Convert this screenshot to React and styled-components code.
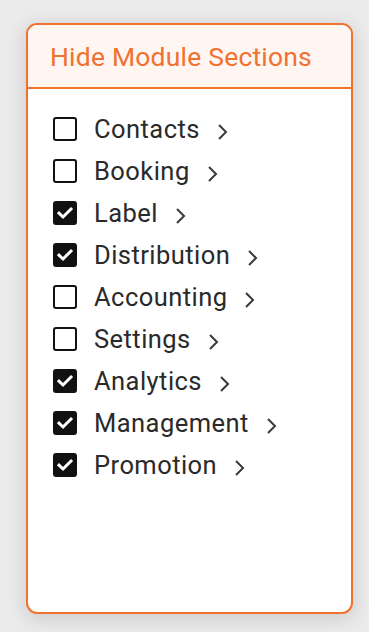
import React, { useState } from "react";
import styled, { createGlobalStyle } from "styled-components";

const GlobalStyle = createGlobalStyle`
  html, body {
    margin: 0;
    padding: 0;
    background: #ebebeb;
    font-family: Roboto, "Noto Sans", sans-serif;
  }
`;

const Page = styled.div`
  width: 369px;
  height: 632px;
  padding: 23px 16px 18px 26px;
  box-sizing: border-box;
  display: flex;
`;

const Card = styled.div`
  flex: 1;
  display: flex;
  flex-direction: column;
  background: #ffffff;
  border: 2px solid #f07130;
  border-radius: 11px;
  box-shadow: 0 4px 18px 2px rgba(0, 0, 0, 0.12);
  overflow: hidden;
`;

const Header = styled.div`
  height: 62px;
  display: flex;
  align-items: center;
  padding: 0 22px;
  background: #fff6f2;
  border-bottom: 2px solid #f07130;
`;

const Title = styled.div`
  font-size: 26.5px;
  letter-spacing: 0.2px;
  color: #f07130;
  font-weight: 400;
  white-space: nowrap;
`;

const List = styled.div`
  display: flex;
  flex-direction: column;
  padding: 19px 0 0 25px;
`;

const Row = styled.label`
  height: 42px;
  display: flex;
  align-items: center;
  cursor: pointer;
`;

const Box = styled.span`
  width: 24px;
  height: 24px;
  box-sizing: border-box;
  border-radius: 3px;
  border: 2px solid #111;
  background: ${({ $checked }) => ($checked ? "#111" : "#fff")};
  display: flex;
  align-items: center;
  justify-content: center;
  flex-shrink: 0;
`;

const Name = styled.span`
  margin-left: 17px;
  font-size: 25.5px;
  color: #2a2a2a;
  letter-spacing: 0.45px;
`;

const Chevron = styled.svg`
  margin-left: 16px;
  margin-top: 6px;
  width: 12px;
  height: 18px;
  flex-shrink: 0;
`;

const initial = [
  { name: "Contacts", checked: false },
  { name: "Booking", checked: false },
  { name: "Label", checked: true },
  { name: "Distribution", checked: true },
  { name: "Accounting", checked: false },
  { name: "Settings", checked: false },
  { name: "Analytics", checked: true },
  { name: "Management", checked: true },
  { name: "Promotion", checked: true },
];

export default function App() {
  const [sections, setSections] = useState(initial);

  const toggle = (i) => {
    setSections(sections.map((s, j) => (j === i ? { ...s, checked: !s.checked } : s)));
  };

  return (
    <>
      <GlobalStyle />
      <Page>
        <Card>
          <Header>
            <Title>Hide Module Sections</Title>
          </Header>
          <List>
            {sections.map((s, i) => (
              <Row key={s.name} onClick={() => toggle(i)}>
                <Box $checked={s.checked}>
                  {s.checked && (
                    <svg width="18" height="18" viewBox="0 0 18 18">
                      <path d="M3 9.2 L7 13 L15 5" fill="none" stroke="#fff" strokeWidth="3" strokeLinecap="square" />
                    </svg>
                  )}
                </Box>
                <Name>{s.name}</Name>
                <Chevron viewBox="0 0 12 18">
                  <path d="M3 2 L10 9 L3 16" fill="none" stroke="#3a3a3a" strokeWidth="2" />
                </Chevron>
              </Row>
            ))}
          </List>
        </Card>
      </Page>
    </>
  );
}
